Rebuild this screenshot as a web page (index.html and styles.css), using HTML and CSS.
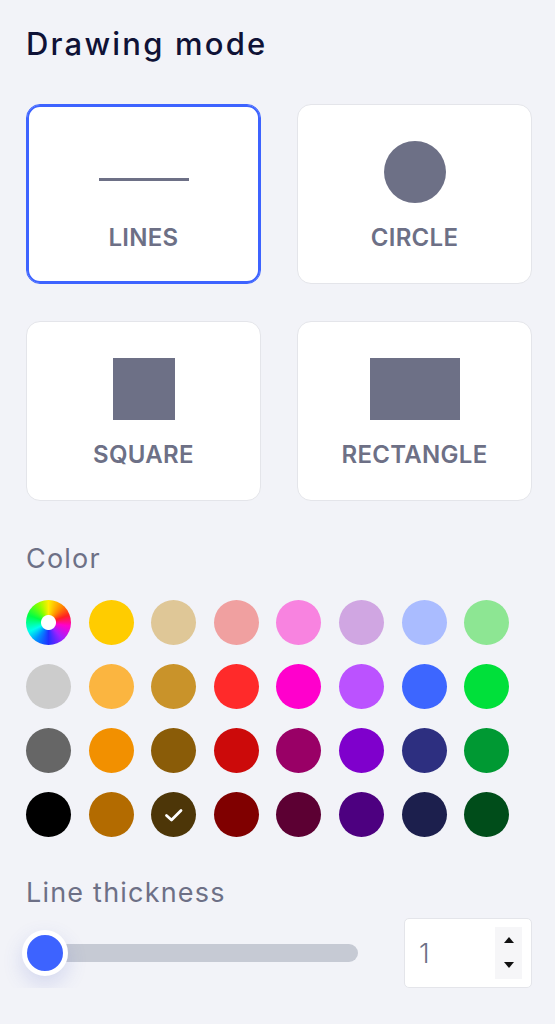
FILE: index.html
```html
<!DOCTYPE html>
<html lang="en">
<head>
<meta charset="utf-8">
<title>Drawing mode</title>
<link rel="stylesheet" href="styles.css">
</head>
<body>
<main class="panel">
  <h1 class="title">Drawing mode</h1>

  <div class="modes">
    <button class="mode is-selected" type="button">
      <span class="mode-icon"><span class="shape-line"></span></span>
      <span class="mode-label">LINES</span>
    </button>
    <button class="mode" type="button">
      <span class="mode-icon"><span class="shape-circle"></span></span>
      <span class="mode-label">CIRCLE</span>
    </button>
    <button class="mode" type="button">
      <span class="mode-icon"><span class="shape-square"></span></span>
      <span class="mode-label">SQUARE</span>
    </button>
    <button class="mode" type="button">
      <span class="mode-icon"><span class="shape-rect"></span></span>
      <span class="mode-label">RECTANGLE</span>
    </button>
  </div>

  <h2 class="section-label">Color</h2>

  <div class="swatches">
    <span class="swatch swatch-wheel"></span>
    <span class="swatch c-ffcc00"></span>
    <span class="swatch c-dfc797"></span>
    <span class="swatch c-f0a0a0"></span>
    <span class="swatch c-f883e0"></span>
    <span class="swatch c-d0a6e2"></span>
    <span class="swatch c-aabcff"></span>
    <span class="swatch c-8de693"></span>

    <span class="swatch c-cccccc"></span>
    <span class="swatch c-fbb540"></span>
    <span class="swatch c-c9932a"></span>
    <span class="swatch c-ff2a2a"></span>
    <span class="swatch c-ff00cc"></span>
    <span class="swatch c-bb52ff"></span>
    <span class="swatch c-3d66ff"></span>
    <span class="swatch c-00e03a"></span>

    <span class="swatch c-666666"></span>
    <span class="swatch c-f29000"></span>
    <span class="swatch c-8a5c08"></span>
    <span class="swatch c-cc0a0a"></span>
    <span class="swatch c-990066"></span>
    <span class="swatch c-7f00cc"></span>
    <span class="swatch c-2d2f80"></span>
    <span class="swatch c-009933"></span>

    <span class="swatch c-000000"></span>
    <span class="swatch c-b36b00"></span>
    <span class="swatch c-4d3608 is-selected">
      <svg class="check" viewBox="0 0 24 24" width="24" height="24" aria-hidden="true">
        <path d="M4.5 12.5 L9.5 17 L19 7.5" fill="none" stroke="#ffffff" stroke-width="2.8" stroke-linecap="round" stroke-linejoin="round"/>
      </svg>
    </span>
    <span class="swatch c-800000"></span>
    <span class="swatch c-5c0033"></span>
    <span class="swatch c-4d0080"></span>
    <span class="swatch c-1c1f4d"></span>
    <span class="swatch c-004d1a"></span>
  </div>

  <h2 class="section-label label-thickness">Line thickness</h2>

  <div class="thickness">
    <div class="slider">
      <div class="track"></div>
      <div class="thumb"></div>
    </div>
    <div class="number-input">
      <span class="number-value">1</span>
      <span class="spinner">
        <svg viewBox="0 0 10 6" width="10" height="6" aria-hidden="true"><path d="M0 6 L5 0 L10 6 Z" fill="#111"/></svg>
        <svg viewBox="0 0 10 6" width="10" height="6" aria-hidden="true"><path d="M0 0 L10 0 L5 6 Z" fill="#111"/></svg>
      </span>
    </div>
  </div>
</main>
</body>
</html>
```

FILE: styles.css
```css
* {
  box-sizing: border-box;
}

html,
body {
  margin: 0;
  padding: 0;
  background: #f2f3f8;
}

body {
  font-family: "Inter", "Noto Sans", "Liberation Sans", sans-serif;
  color: #6d7086;
}

.panel {
  padding: 25px 23px 0 26px;
  width: 555px;
}

.title {
  margin: 0;
  font-size: 31px;
  line-height: 37px;
  font-weight: 500;
  color: #0f1236;
  letter-spacing: 2.2px;
}

.modes {
  margin-top: 42px;
  display: grid;
  grid-template-columns: 235px 235px;
  column-gap: 36px;
  row-gap: 37px;
}

.mode {
  height: 180px;
  background: #ffffff;
  border: 1px solid #e4e5ea;
  border-radius: 14px;
  padding: 36px 0 0;
  margin: 0;
  display: flex;
  flex-direction: column;
  align-items: center;
  font: inherit;
  cursor: pointer;
}

.mode.is-selected {
  border-color: #3d63ff;
  box-shadow: inset 0 0 0 2px #3d63ff;
}

.mode-icon {
  height: 62px;
  display: flex;
  align-items: center;
  justify-content: center;
}

.shape-line {
  display: block;
  width: 90px;
  height: 3px;
  margin-top: 14px;
  background: #6d7086;
}

.shape-circle {
  display: block;
  width: 62px;
  height: 62px;
  border-radius: 50%;
  background: #6d7086;
}

.shape-square {
  display: block;
  width: 62px;
  height: 62px;
  background: #6d7086;
}

.shape-rect {
  display: block;
  width: 90px;
  height: 62px;
  background: #6d7086;
}

.mode-label {
  margin-top: 21px;
  font-size: 24px;
  line-height: 28px;
  font-weight: 600;
  color: #6d7086;
  letter-spacing: 0.3px;
}

.section-label {
  margin: 42px 0 0;
  font-size: 27px;
  line-height: 32px;
  font-weight: 400;
  color: #6d7086;
  letter-spacing: 1.2px;
}

.swatches {
  margin-top: 25px;
  display: grid;
  grid-template-columns: repeat(8, 45px);
  column-gap: 17.6px;
  row-gap: 19px;
}

.swatch {
  width: 45px;
  height: 45px;
  border-radius: 50%;
  display: flex;
  align-items: center;
  justify-content: center;
}

.swatch-wheel {
  background:
    radial-gradient(circle, #ffffff 0 7px, transparent 8px),
    conic-gradient(#ffee00, #ff8800 40deg, #ff2020 70deg, #ff00cc 100deg, #a020ff 140deg, #2030ff 180deg, #0090ff 215deg, #00ffee 245deg, #00ff44 290deg, #88ff00 330deg, #ffee00);
}

.c-ffcc00 { background: #ffcc00; }
.c-dfc797 { background: #dfc797; }
.c-f0a0a0 { background: #f0a0a0; }
.c-f883e0 { background: #f883e0; }
.c-d0a6e2 { background: #d0a6e2; }
.c-aabcff { background: #aabcff; }
.c-8de693 { background: #8de693; }
.c-cccccc { background: #cccccc; }
.c-fbb540 { background: #fbb540; }
.c-c9932a { background: #c9932a; }
.c-ff2a2a { background: #ff2a2a; }
.c-ff00cc { background: #ff00cc; }
.c-bb52ff { background: #bb52ff; }
.c-3d66ff { background: #3d66ff; }
.c-00e03a { background: #00e03a; }
.c-666666 { background: #666666; }
.c-f29000 { background: #f29000; }
.c-8a5c08 { background: #8a5c08; }
.c-cc0a0a { background: #cc0a0a; }
.c-990066 { background: #990066; }
.c-7f00cc { background: #7f00cc; }
.c-2d2f80 { background: #2d2f80; }
.c-009933 { background: #009933; }
.c-000000 { background: #000000; }
.c-b36b00 { background: #b36b00; }
.c-4d3608 { background: #4d3608; }
.c-800000 { background: #800000; }
.c-5c0033 { background: #5c0033; }
.c-4d0080 { background: #4d0080; }
.c-1c1f4d { background: #1c1f4d; }
.c-004d1a { background: #004d1a; }

.check {
  display: block;
}

.label-thickness {
  margin-top: 40px;
}

.thickness {
  margin-top: 9px;
  display: flex;
  align-items: center;
  justify-content: space-between;
}

.slider {
  position: relative;
  width: 336px;
  height: 70px;
  margin-left: -4px;
}

.track {
  position: absolute;
  left: 10px;
  right: 0;
  top: 26px;
  height: 18px;
  border-radius: 9px;
  background: #c6cad4;
}

.thumb {
  position: absolute;
  left: 0;
  top: 12px;
  width: 46px;
  height: 46px;
  border-radius: 50%;
  background: #3d63ff;
  border: 5px solid #ffffff;
  box-shadow: 0 8px 20px rgba(70, 90, 200, 0.18);
}

.number-input {
  width: 128px;
  height: 70px;
  background: #ffffff;
  border: 1px solid #e4e5ea;
  border-radius: 5px;
  display: flex;
  align-items: center;
  justify-content: space-between;
  padding: 0 9px 0 14px;
}

.number-value {
  font-size: 27px;
  font-weight: 300;
  color: #6d7086;
}

.spinner {
  width: 27px;
  height: 52px;
  background: #f6f6f8;
  display: flex;
  flex-direction: column;
  align-items: center;
  justify-content: space-between;
  padding: 10px 0 11px;
}

.spinner svg {
  display: block;
}
```
